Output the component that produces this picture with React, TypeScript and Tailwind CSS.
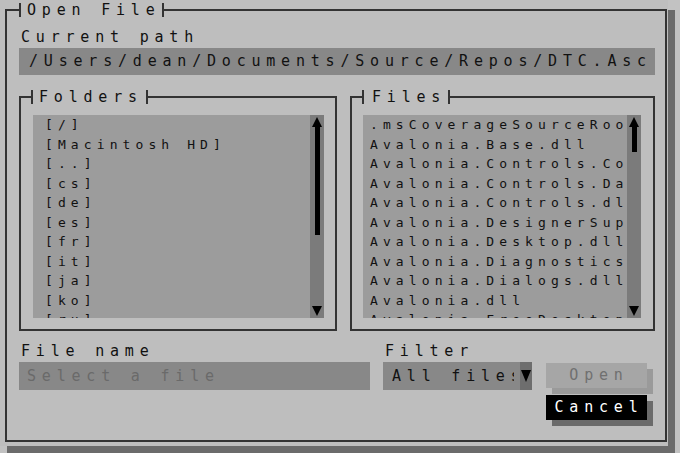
import React from 'react';

const mono = { fontFamily: '"DejaVu Sans Mono", "Liberation Mono", monospace' };

const folders = ['[/]', '[Macintosh HD]', '[..]', '[cs]', '[de]', '[es]', '[fr]', '[it]', '[ja]', '[ko]', '[ru]'];
const files = [
  '.msCoverageSourceRootsMapping',
  'Avalonia.Base.dll',
  'Avalonia.Controls.ColorPicker.dll',
  'Avalonia.Controls.DataGrid.dll',
  'Avalonia.Controls.dll',
  'Avalonia.DesignerSupport.dll',
  'Avalonia.Desktop.dll',
  'Avalonia.Diagnostics.dll',
  'Avalonia.Dialogs.dll',
  'Avalonia.dll',
  'Avalonia.FreeDesktop.dll',
];

const Up = () => (
  <svg width="10" height="10" viewBox="0 0 10 10" className="shrink-0">
    <path d="M5 0 L10 10 L0 10 Z" fill="#000" />
  </svg>
);

const Down = () => (
  <svg width="10" height="10" viewBox="0 0 10 10" className="shrink-0">
    <path d="M0 0 L10 0 L5 10 Z" fill="#000" />
  </svg>
);

const Scroll: React.FC<{ thumb: number }> = ({ thumb }) => (
  <div className="w-[14px] h-full bg-[#7b7b7b] flex flex-col items-center pt-[2px] pb-[2px]">
    <Up />
    <div className="flex-1 w-full flex flex-col items-center">
      <div className="w-[5px] bg-black" style={{ height: thumb }} />
    </div>
    <Down />
  </div>
);

const ListBox: React.FC<{ items: string[]; width: string; pad: string; thumb: number }> = ({ items, width, pad, thumb }) => (
  <div className={`${width} h-[203px] bg-[#9c9c9c] flex overflow-hidden`}>
    <div className={`flex-1 min-w-0 overflow-hidden ${pad} text-[13px] leading-[19.5px] tracking-[5.1px] text-[#111]`}>
      {items.map((it) => (
        <div key={it} className="whitespace-nowrap">{it}</div>
      ))}
    </div>
    <Scroll thumb={thumb} />
  </div>
);

export default function App() {
  return (
    <div style={mono} className="w-[680px] h-[453px] bg-[#c2c2c2] overflow-hidden text-[15px] tracking-[5.8px] text-[#111]">
      <div className="w-[668px] h-[446px] bg-[#bebebe] shadow-[7px_10px_0_0_#6b6b6b] pt-[3px] pl-[5px]">
        <fieldset className="w-[662px] h-[439px] min-w-0 border-2 border-[#333] m-0 p-0">
          <legend className="ml-[12px] pl-[6px] pr-[2px] border-x-2 border-[#333] leading-[14px]">Open File</legend>

          <div className="ml-[14px] mt-[10px] leading-[20px]">Current path</div>
          <div className="ml-[12px] mt-[1px] w-[636px] h-[27px] bg-[#888888] pl-[10px] leading-[27px] whitespace-nowrap overflow-hidden">
            /Users/dean/Documents/Source/Repos/DTC.Asc
          </div>

          <div className="flex ml-[12px] mt-[15px] gap-[13px]">
            <fieldset className="w-[318px] h-[241px] min-w-0 border-2 border-[#333] m-0 p-0">
              <legend className="ml-[10px] pl-[6px] pr-[3px] border-x-2 border-[#333] leading-[14px]">Folders</legend>
              <div className="ml-[12px] mt-[11px]">
                <ListBox items={folders} width="w-[291px]" pad="pl-[12px]" thumb={108} />
              </div>
            </fieldset>
            <fieldset className="w-[305px] h-[241px] min-w-0 border-2 border-[#333] m-0 p-0">
              <legend className="ml-[10px] pl-[8px] pr-[2px] border-x-2 border-[#333] leading-[14px]">Files</legend>
              <div className="ml-[11px] mt-[11px]">
                <ListBox items={files} width="w-[278px]" pad="pl-[7px]" thumb={25} />
              </div>
            </fieldset>
          </div>

          <div className="flex mt-[10px] ml-[12px]">
            <div className="w-[351px]">
              <div className="pl-[2px] leading-[20px]">File name</div>
              <div className="mt-[1px] h-[28px] bg-[#888888] pl-[8px] leading-[28px] text-[#6a6a6a]">Select a file</div>
            </div>
            <div className="ml-[13px] w-[149px]">
              <div className="pl-[2px] leading-[20px]">Filter</div>
              <div className="mt-[1px] h-[28px] bg-[#888888] flex">
                <div className="flex-1 min-w-0 pl-[9px] pr-[6px]">
                  <div className="overflow-hidden whitespace-nowrap leading-[28px]">All files</div>
                </div>
                <div className="w-[12px] bg-[#6e6e6e] flex items-center justify-center">
                  <svg width="10" height="12" viewBox="0 0 10 12">
                    <path d="M0 0 L10 0 L5 12 Z" fill="#000" />
                  </svg>
                </div>
              </div>
            </div>
            <div className="ml-[14px] pt-[22px] flex flex-col gap-[7px]">
              <div className="w-[101px] h-[25px] bg-[#a6a6a6] text-[#707070] shadow-[6px_6px_0_0_#9a9a9a] text-center leading-[25px] pl-[5px]">Open</div>
              <div className="w-[101px] h-[25px] bg-black text-white shadow-[6px_6px_0_0_#6b6b6b] text-center leading-[25px] pl-[5px]">Cancel</div>
            </div>
          </div>
        </fieldset>
      </div>
    </div>
  );
}
